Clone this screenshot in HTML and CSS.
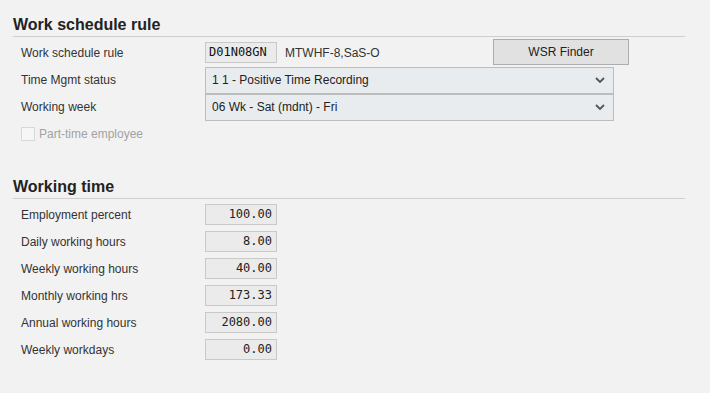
FILE: index.html
```html
<!DOCTYPE html>
<html>
<head>
	<title>Work schedule</title>
	<link rel="stylesheet" href="styles.css">
</head>
<body>

	<div class="section">
		<h2 class="section-title">Work schedule rule</h2>
		<div class="form">
			<div class="row">
				<label class="lbl">Work schedule rule</label>
				<div class="field code">D01N08GN</div>
				<span class="desc">MTWHF-8,SaS-O</span>
				<button class="btn">WSR Finder</button>
			</div>
			<div class="row">
				<label class="lbl">Time Mgmt status</label>
				<div class="select">
					<span>1 1 - Positive Time Recording</span>
					<svg class="chev" width="10" height="6" viewBox="0 0 10 6"><path d="M1 1 L5 5 L9 1" fill="none" stroke="#555" stroke-width="1.8"/></svg>
				</div>
			</div>
			<div class="row">
				<label class="lbl">Working week</label>
				<div class="select">
					<span>06 Wk - Sat (mdnt) - Fri</span>
					<svg class="chev" width="10" height="6" viewBox="0 0 10 6"><path d="M1 1 L5 5 L9 1" fill="none" stroke="#555" stroke-width="1.8"/></svg>
				</div>
			</div>
			<div class="row">
				<label class="check"><span class="box"></span>Part-time employee</label>
			</div>
		</div>
	</div>

	<div class="section second">
		<h2 class="section-title">Working time</h2>
		<div class="form">
			<div class="row">
				<label class="lbl">Employment percent</label>
				<div class="field num">100.00</div>
			</div>
			<div class="row">
				<label class="lbl">Daily working hours</label>
				<div class="field num">8.00</div>
			</div>
			<div class="row">
				<label class="lbl">Weekly working hours</label>
				<div class="field num">40.00</div>
			</div>
			<div class="row">
				<label class="lbl">Monthly working hrs</label>
				<div class="field num">173.33</div>
			</div>
			<div class="row">
				<label class="lbl">Annual working hours</label>
				<div class="field num">2080.00</div>
			</div>
			<div class="row">
				<label class="lbl">Weekly workdays</label>
				<div class="field num">0.00</div>
			</div>
		</div>
	</div>

</body>
</html>
```

FILE: styles.css
```css
body{
	margin: 0;
	background: #f2f2f2;
	font-family: "Liberation Sans", Arial, sans-serif;
	color: #333;
}

.section{
	width: 672px;
	margin-left: 13px;
}

.second{
	margin-top: 15px;
}

.section-title{
	margin: 0;
	padding: 15px 0 1px;
	font-size: 16px;
	line-height: 20px;
	font-weight: bold;
	color: #222;
	border-bottom: 1px solid #cfcfcf;
}

.form{
	padding: 2px 0 0 8px;
}

.row{
	display: flex;
	align-items: center;
	height: 27px;
	font-size: 12px;
}

.lbl{
	width: 184px;
	flex: none;
}

.field{
	box-sizing: border-box;
	width: 72px;
	height: 21px;
	line-height: 19px;
	background: #ebebeb;
	border: 1px solid #c9c9c9;
	font-family: "DejaVu Sans Mono", "Liberation Mono", monospace;
	font-size: 12px;
	color: #222;
}

.code{
	padding-left: 3px;
	color: #111;
}

.num{
	text-align: right;
	padding-right: 4px;
}

.desc{
	margin-left: 8px;
	width: 208px;
	color: #333;
}

.btn{
	box-sizing: border-box;
	width: 136px;
	height: 26px;
	align-self: flex-start;
	background: #e1e1e1;
	border: 1px solid #adadad;
	font-family: "Liberation Sans", Arial, sans-serif;
	font-size: 12px;
	color: #222;
	padding: 0;
}

.select{
	box-sizing: border-box;
	width: 409px;
	height: 27px;
	display: flex;
	align-items: center;
	justify-content: space-between;
	padding: 0 8px 0 6px;
	background: #e9ecee;
	border: 1px solid #bdbdbd;
	color: #222;
}

.row + .row .select{
	margin-top: 1px;
}

.check{
	display: flex;
	align-items: center;
	color: #a3a3a3;
}

.box{
	box-sizing: border-box;
	width: 14px;
	height: 14px;
	margin-right: 4px;
	border: 1px solid #d8d8d8;
	background: #f6f6f6;
}
```
